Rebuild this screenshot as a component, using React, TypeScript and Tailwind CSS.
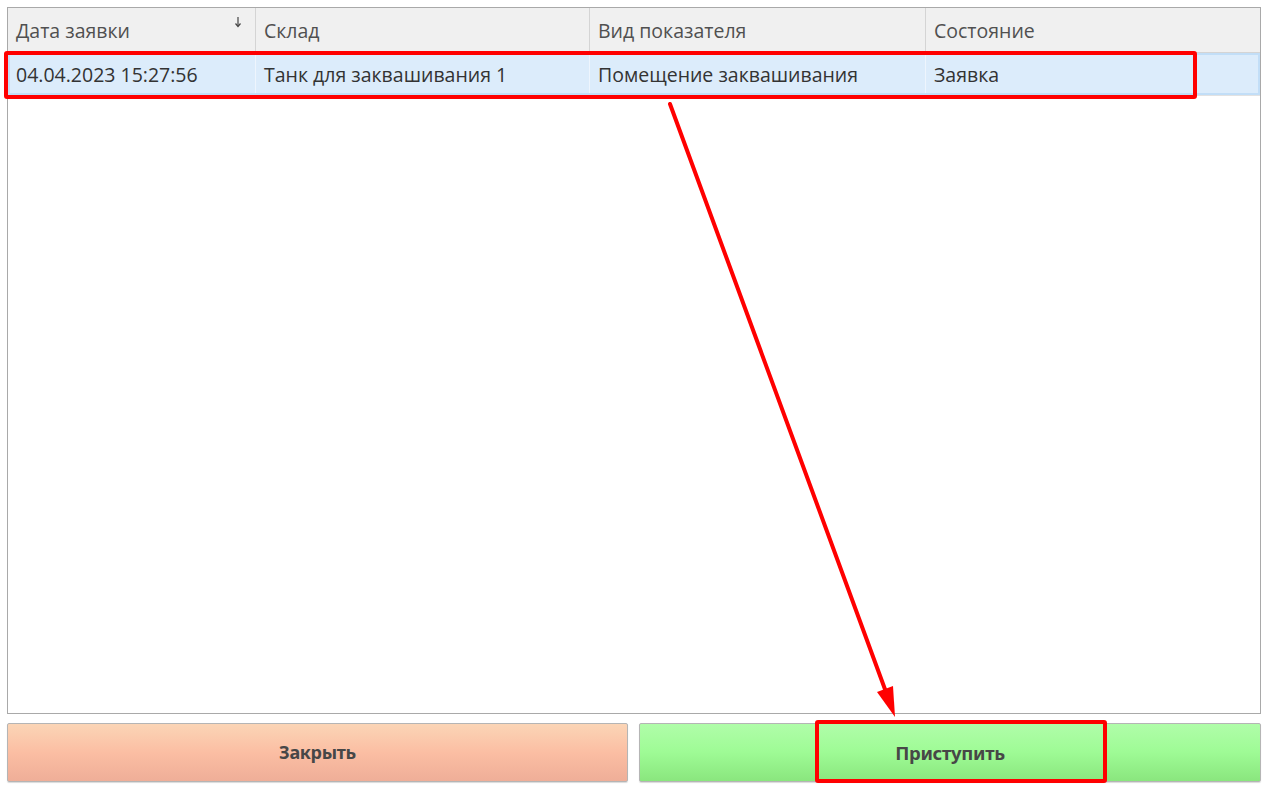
import React from "react";

const font = { fontFamily: '"Open Sans", "Noto Sans", sans-serif' };

export default function App() {
  return (
    <div className="relative w-[1272px] h-[794px] bg-white overflow-hidden" style={font}>
      <div className="flex flex-col ml-[7px] pt-[7px] w-[1254px]">
        {/* Grid */}
        <div className="h-[707px] border border-[#a9a9a9] bg-white flex flex-col">
          <div className="flex h-[45px] bg-[#f0f0f0] border-b border-[#d4d4d4] text-[19.5px] text-[#505050]">
            <div className="relative w-[248px] border-r border-[#d4d4d4] pl-[8px] flex items-center">
              <span className="mt-[2px]">Дата заявки</span>
              <svg className="absolute left-[226px] top-[8px]" width="8" height="12" viewBox="0 0 8 12">
                <line x1="4" y1="1" x2="4" y2="10" stroke="#444" strokeWidth="1.2" />
                <path d="M1.5 7.5 L4 10.5 L6.5 7.5" fill="none" stroke="#444" strokeWidth="1.2" />
              </svg>
            </div>
            <div className="w-[334px] border-r border-[#d4d4d4] pl-[8px] flex items-center"><span className="mt-[2px]">Склад</span></div>
            <div className="w-[336px] border-r border-[#d4d4d4] pl-[8px] flex items-center"><span className="mt-[2px]">Вид показателя</span></div>
            <div className="flex-1 pl-[8px] flex items-center"><span className="mt-[2px]">Состояние</span></div>
          </div>
          <div className="flex h-[42px] bg-[#dcecfb] border-2 border-[#c2def7] text-[19.5px] text-[#333]">
            <div className="w-[246px] border-r border-[#eef5fd] pl-[6px] flex items-center"><span className="mt-[2px]">04.04.2023 15:27:56</span></div>
            <div className="w-[334px] border-r border-[#eef5fd] pl-[8px] flex items-center"><span className="mt-[2px]">Танк для заквашивания 1</span></div>
            <div className="w-[336px] border-r border-[#eef5fd] pl-[8px] flex items-center"><span className="mt-[2px]">Помещение заквашивания</span></div>
            <div className="flex-1 pl-[8px] flex items-center"><span className="mt-[2px]">Заявка</span></div>
          </div>
          <div className="h-px bg-[#e2e2e2]" />
        </div>
        {/* Buttons */}
        <div className="flex gap-[11px] mt-[9px]">
          <div className="w-[621px] h-[59px] rounded-[2px] border border-[#b5b5b5] bg-gradient-to-b from-[#fbd5b6] via-[#fbbea3] to-[#efae98] flex items-center justify-center shadow-[0_1px_1px_rgba(0,0,0,0.15)]">
            <span className="text-[18px] font-bold text-[#474747] tracking-[-0.3px]" style={{ fontFamily: '"Noto Sans", "Open Sans", sans-serif' }}>Закрыть</span>
          </div>
          <div className="w-[622px] h-[59px] rounded-[2px] border border-[#b5b5b5] bg-gradient-to-b from-[#b0fda9] via-[#9efb95] to-[#8ae67e] flex items-center justify-center shadow-[0_1px_1px_rgba(0,0,0,0.15)]">
            <span className="text-[18.5px] font-bold text-[#474747] tracking-[-0.3px]" style={{ fontFamily: '"Noto Sans", "Open Sans", sans-serif' }}>Приступить</span>
          </div>
        </div>
      </div>

      {/* Annotations */}
      <div className="absolute left-[4px] top-[51px] w-[1193px] h-[48px] border-4 border-[#ff0000] rounded-[3px]" />
      <div className="absolute left-[815px] top-[720px] w-[292px] h-[63px] border-4 border-[#ff0000] rounded-[3px]" />
      <svg className="absolute left-0 top-0" width="1272" height="794" viewBox="0 0 1272 794">
        <line x1="670" y1="104" x2="886" y2="692" stroke="#ff0000" strokeWidth="4" strokeLinecap="round" />
        <polygon points="895,717 877,692 893,686" fill="#ff0000" />
      </svg>
    </div>
  );
}
